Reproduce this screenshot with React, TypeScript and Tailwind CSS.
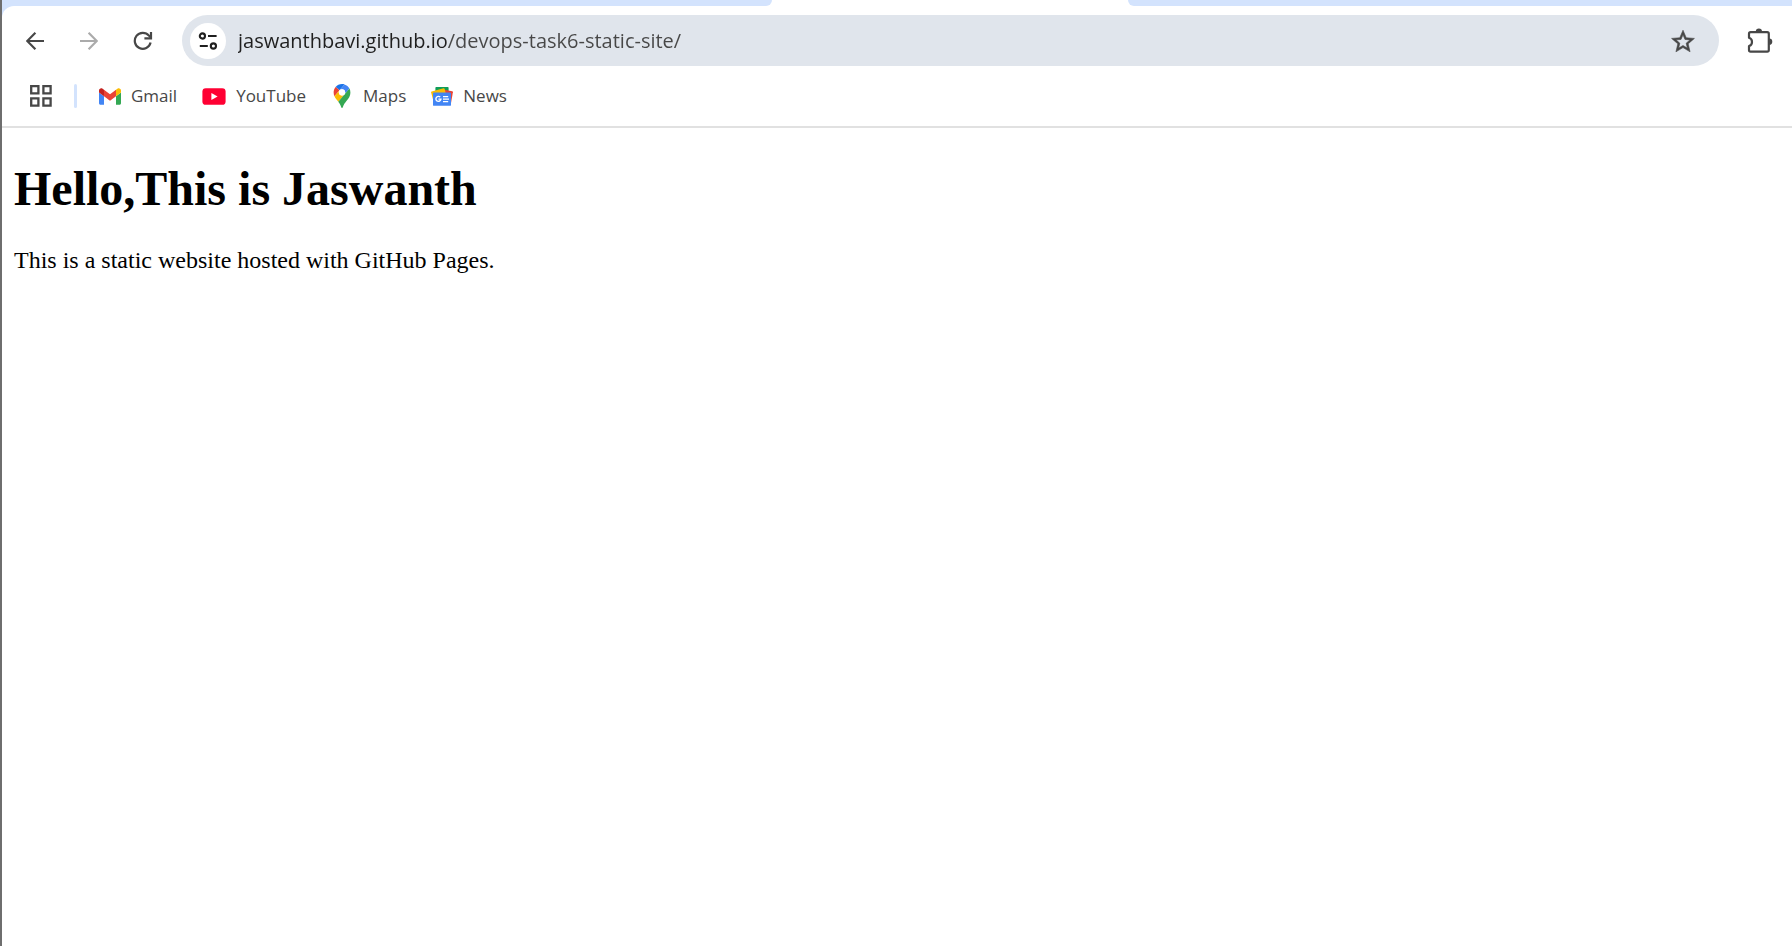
import type { ReactNode } from "react";

const DOMAIN = "jaswanthbavi.github.io";
const PATH = "/devops-task6-static-site/";

function BackIcon({ className }: { className?: string }) {
  return (
    <svg viewBox="0 0 18 18" className={className} fill="none" stroke="currentColor" strokeWidth="2.2" aria-hidden="true">
      <path d="M18 9H1.6M9.4 0.8L1.2 9l8.2 8.2" />
    </svg>
  );
}

function ReloadIcon() {
  return (
    <svg viewBox="0 0 20 20" className="size-5" fill="none" stroke="currentColor" strokeWidth="2.2" aria-hidden="true">
      <path d="M17.6 11.6A8 8 0 1 1 15.9 4.6L18 6.8" />
      <path d="M18 1V7.4H11.4" />
    </svg>
  );
}

function SiteInfoIcon() {
  return (
    <svg viewBox="0 0 20 18" className="h-[18px] w-5" fill="none" stroke="#1f1f1f" strokeWidth="2.1" aria-hidden="true">
      <circle cx="4.4" cy="4" r="2.6" />
      <path d="M10 4h8.6M1.8 14h8" />
      <circle cx="15.4" cy="14" r="2.6" />
    </svg>
  );
}

function StarIcon() {
  return (
    <svg viewBox="1.5 1.5 21 20" className="h-6 w-6" fill="#474747" stroke="#474747" strokeWidth="0.5" aria-hidden="true">
      <path d="M22 9.24l-7.19-.62L12 2 9.19 8.63 2 9.24l5.46 4.73L5.82 21 12 17.27 18.18 21l-1.63-7.03L22 9.24zM12 15.4l-3.76 2.27 1-4.28-3.32-2.88 4.38-.38L12 6.1l1.71 4.04 4.38.38-3.32 2.88 1 4.28L12 15.4z" />
    </svg>
  );
}

function ExtensionIcon() {
  return (
    <svg viewBox="0 0 26 26" className="size-[26px]" aria-hidden="true">
      <path
        d="M3.6 4.2H20.2a1.6 1.6 0 0 1 1.6 1.6V22a1.6 1.6 0 0 1-1.6 1.6H3.6a1.6 1.6 0 0 1-1.6-1.6V18a4.3 4.3 0 0 0 0-8.2V5.8a1.6 1.6 0 0 1 1.6-1.6z"
        fill="none"
        stroke="#474747"
        strokeWidth="2.2"
        strokeLinejoin="round"
      />
      <path d="M8.8 3.6a3.1 3.1 0 0 1 6.2 0zM22.2 10.6a3.1 3.1 0 0 1 0 6.2z" fill="#474747" />
    </svg>
  );
}

function AppsIcon() {
  return (
    <svg viewBox="0 0 22 22" className="size-[22px]" fill="none" stroke="#474747" strokeWidth="2.3" aria-hidden="true">
      <path d="M1.2 1.2h7.2v7.2H1.2zM13.4 1.2h7.2v7.2h-7.2zM1.2 13.4h7.2v7.2H1.2zM13.4 13.4h7.2v7.2h-7.2z" />
    </svg>
  );
}

function GmailIcon() {
  return (
    <svg viewBox="52 42 88 66" className="h-[17px] w-[22px]" aria-hidden="true">
      <path fill="#4285f4" d="M58 108h14V74L52 59v43c0 3.32 2.69 6 6 6" />
      <path fill="#34a853" d="M120 108h14c3.32 0 6-2.69 6-6V59l-20 15" />
      <path fill="#fbbc04" d="M120 48v26l20-15v-8c0-7.42-8.47-11.65-14.4-7.2" />
      <path fill="#ea4335" d="M72 74V48l24 18 24-18v26L96 92" />
      <path fill="#c5221f" d="M52 51v8l20 15V48l-5.6-4.2c-5.94-4.45-14.4-.22-14.4 7.2" />
    </svg>
  );
}

function YouTubeIcon() {
  return (
    <svg viewBox="0 0 24 17" className="h-[17px] w-6" aria-hidden="true">
      <rect x="0.4" y="0.2" width="23.2" height="16.6" rx="3.4" fill="#ff0033" />
      <path d="M9.4 5v7l6.2-3.5z" fill="#fff" />
    </svg>
  );
}

function MapsIcon() {
  return (
    <svg viewBox="0 0 92.3 132.3" className="h-6 w-[22px]" aria-hidden="true">
      <path fill="#1a73e8" d="M60.2 2.2C55.8.8 51 0 46.1 0 32 0 19.3 6.4 10.8 16.5l21.8 18.3L60.2 2.2z" />
      <path fill="#ea4335" d="M10.8 16.5C4.1 24.5 0 34.9 0 46.1c0 8.7 1.7 15.7 4.6 22l28-33.3-21.8-18.3z" />
      <path fill="#4285f4" d="M46.2 28.5c9.8 0 17.7 7.9 17.7 17.7 0 4.3-1.6 8.3-4.2 11.4 0 0 13.9-16.6 27.5-32.7-5.6-10.8-15.3-19-27-22.7L32.6 34.8c3.3-3.8 8.1-6.3 13.6-6.3" />
      <path fill="#fbbc04" d="M46.2 63.8c-9.8 0-17.7-7.9-17.7-17.7 0-4.3 1.5-8.3 4.1-11.3l-28 33.3c4.8 10.6 12.8 19.2 21 29.9l34.1-40.5c-3.3 3.9-8.1 6.3-13.5 6.3" />
      <path fill="#34a853" d="M59.1 109.2c15.4-24.1 33.3-35 33.3-63 0-7.7-1.9-14.9-5.2-21.3L25.6 98c2.6 3.4 5.3 7.3 7.9 11.3 9.4 14.5 6.8 23.1 12.8 23.1s3.4-8.7 12.8-23.2" />
      <circle cx="46.2" cy="46.1" r="17.6" fill="#fff" />
    </svg>
  );
}

function NewsIcon() {
  return (
    <svg viewBox="0 0 22 19" className="h-[19px] w-[22px]" aria-hidden="true">
      <path fill="#0f9d58" d="M4.4.8q0-.8.8-.8h11.6q.8 0 .8.8V8H4.4z" />
      <path fill="#ea4335" d="M12 2.6l9.2 1.6q.8.2.7 1L20 16 8 12z" />
      <path fill="#fbbc04" d="M.1 5.4q-.2-.8.6-1L12.6 1.2q.8-.2 1 .6L16 11 3 16z" />
      <rect x="2" y="5.4" width="18" height="13.4" rx="0.9" fill="#4285f4" />
      <path fill="none" stroke="#fff" strokeWidth="1.4" d="M9.2 10.1a2.5 2.5 0 1 0 .7 2H7.4M12 9.6h5.2M12 12.1h6M12 14.6h5.2" />
    </svg>
  );
}

function Bookmark({ href, icon, children }: { href: string; icon: ReactNode; children: string }) {
  return (
    <a href={href} className="flex items-center gap-[10px] text-[17px] leading-6 text-[#474747]">
      {icon}
      {children}
    </a>
  );
}

export default function App() {
  return (
    <div className="flex min-h-screen flex-col border-l-2 border-[#6e6e6e] bg-white font-['Open_Sans',sans-serif]">
      <header className="bg-[#d3e3fd]">
        <div className="flex h-[6px] bg-white">
          <div className="w-[43%] rounded-br-[12px] bg-[#d3e3fd]" />
          <div className="w-[356px]" />
          <div className="flex-1 rounded-bl-[12px] bg-[#d3e3fd]" />
        </div>
        <div className="rounded-tl-[12px] border-b-2 border-[#e1e1e1] bg-white">
          <nav aria-label="Toolbar" className="flex items-center pt-[9px] pr-[19px] pl-6">
            <button type="button" aria-label="Back" className="mr-9 text-[#474747]">
              <BackIcon className="size-[18px]" />
            </button>
            <button type="button" aria-label="Forward" disabled className="mr-[35px] text-[#ababab]">
              <BackIcon className="size-[18px] rotate-180" />
            </button>
            <button type="button" aria-label="Reload" className="mr-[29px] text-[#474747]">
              <ReloadIcon />
            </button>
            <div className="flex h-[51px] min-w-0 flex-1 items-center rounded-full bg-[#e0e5ec] pr-6 pl-2">
              <button
                type="button"
                aria-label="View site information"
                className="flex size-9 shrink-0 items-center justify-center rounded-full bg-white"
              >
                <SiteInfoIcon />
              </button>
              <input
                type="text"
                aria-label="Address"
                defaultValue={DOMAIN + PATH}
                className="ml-3 h-8 min-w-0 flex-1 bg-[linear-gradient(to_right,#1f1f1f_210px,#474747_210px)] bg-clip-text text-[20px] leading-8 text-transparent caret-black outline-none"
              />
              <button type="button" aria-label="Bookmark this page">
                <StarIcon />
              </button>
            </div>
            <button type="button" aria-label="Extensions" className="ml-7">
              <ExtensionIcon />
            </button>
          </nav>
          <nav aria-label="Bookmarks" className="flex h-[60px] items-center pl-7">
            <button type="button" aria-label="Apps">
              <AppsIcon />
            </button>
            <div className="mr-[22px] ml-[22px] h-6 w-[3px] rounded-full bg-[#d3e3fd]" />
            <div className="flex gap-[25px]">
              <Bookmark href="https://mail.google.com/" icon={<GmailIcon />}>Gmail</Bookmark>
              <Bookmark href="https://www.youtube.com/" icon={<YouTubeIcon />}>YouTube</Bookmark>
              <Bookmark href="https://maps.google.com/" icon={<MapsIcon />}>Maps</Bookmark>
              <Bookmark href="https://news.google.com/" icon={<NewsIcon />}>News</Bookmark>
            </div>
          </nav>
        </div>
      </header>
      <main className="px-3 pt-8 font-['Liberation_Serif',serif] text-black">
        <h1 className="text-[48px] leading-[58px] font-bold">Hello,This is Jaswanth</h1>
        <p className="mt-7 text-[24px] leading-7">This is a static website hosted with GitHub Pages.</p>
      </main>
    </div>
  );
}
